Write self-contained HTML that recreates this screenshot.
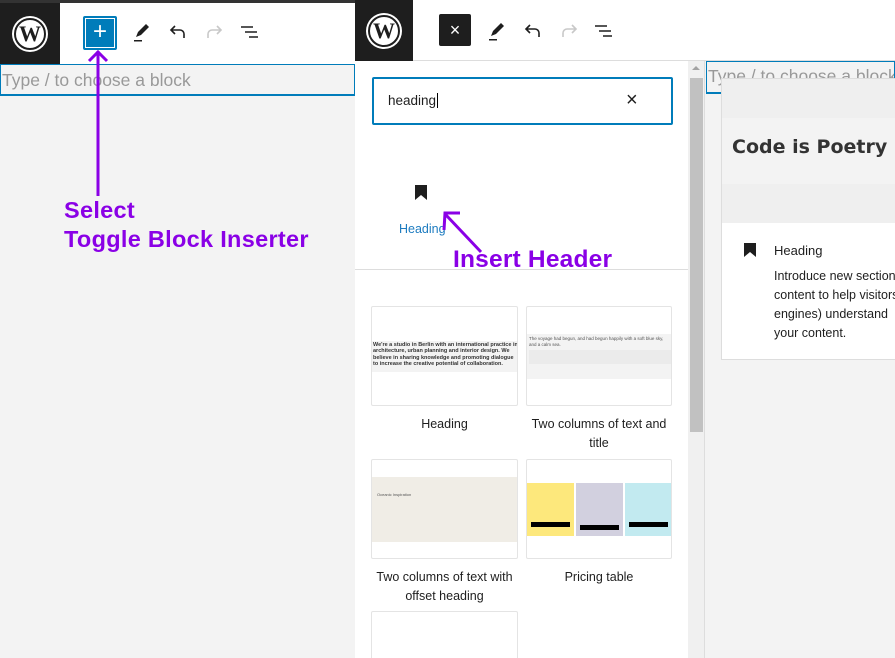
<!DOCTYPE html>
<html><head><meta charset="utf-8"><style>
*{margin:0;padding:0;box-sizing:border-box}
html,body{width:895px;height:658px;overflow:hidden}
body{position:relative;background:#f3f3f3;font-family:"Liberation Sans",sans-serif}
.a{position:absolute}
.logo{background:#1e1e1e;display:flex;align-items:center;justify-content:center}
.wp{width:32px;height:32px;border-radius:50%;background:#fff;color:#1e1e1e;font:bold 22px "Liberation Serif",serif;display:flex;align-items:center;justify-content:center;border:2px solid #1e1e1e;box-shadow:0 0 0 2px #fff}
.purple{color:#8a00e6;font-weight:bold}
.thumb{position:absolute;background:#fff;border:1px solid #e4e4e4;border-radius:2px;overflow:hidden}
.cap{position:absolute;font-size:12.5px;color:#1e1e1e;text-align:center;line-height:19px}
</style></head><body>
<!-- LEFT -->
<div class="a" style="left:0;top:0;width:355px;height:64px;background:#fff;border-top:3px solid #333"></div>
<div class="a logo" style="left:0;top:3px;width:60px;height:61px"><div class="wp">W</div></div>
<div class="a" style="left:83px;top:16px;width:34px;height:34px;background:#007cba;border:2px solid #007cba;box-shadow:inset 0 0 0 1px #fff;border-radius:2px;color:#fff;font-size:24px;line-height:28px;text-align:center">+</div>
<svg class="a" style="left:130px;top:20px" width="24" height="24" viewBox="0 0 24 24"><path d="M6 17l2-5 8-8 3 3-8 8z" fill="#1e1e1e"/><rect x="4" y="20" width="8" height="1.5" fill="#1e1e1e"/></svg>
<svg class="a" style="left:166px;top:20px" width="24" height="24" viewBox="0 0 24 24"><path d="M18 18v-4a4 4 0 0 0-4-4H6M9 6l-4 4 4 4" fill="none" stroke="#1e1e1e" stroke-width="1.6"/></svg>
<svg class="a" style="left:202px;top:20px" width="24" height="24" viewBox="0 0 24 24"><path d="M6 18v-4a4 4 0 0 1 4-4h8M15 6l4 4-4 4" fill="none" stroke="#c8c8c8" stroke-width="1.6"/></svg>
<svg class="a" style="left:238px;top:20px" width="24" height="24" viewBox="0 0 24 24"><path d="M3 7h12M7 12h12M11 17h9" stroke="#1e1e1e" stroke-width="1.6"/></svg>
<div class="a" style="left:0;top:64px;width:355px;height:32px;border:1px solid #007cba;border-bottom:2px solid #007cba;font-size:17.5px;color:#999;padding:5px 0 0 1px;background:#f3f3f3">Type / to choose a block</div>
<svg class="a" style="left:85px;top:48px" width="26" height="148"><path d="M13 148V3M4 13l9-9 9 9" fill="none" stroke="#8a00e6" stroke-width="3"/></svg>
<div class="a purple" style="left:64px;top:196px;font-size:23.5px;line-height:29px;letter-spacing:0.3px">Select<br>Toggle Block Inserter</div>

<!-- RIGHT -->
<div class="a" style="left:355px;top:0;width:540px;height:61px;background:#fff;border-bottom:1px solid #ddd"></div>
<div class="a logo" style="left:355px;top:0;width:58px;height:61px"><div class="wp">W</div></div>
<div class="a" style="left:439px;top:14px;width:32px;height:32px;background:#1e1e1e;border-radius:2px;color:#fff;font-size:18px;line-height:32px;text-align:center">×</div>
<svg class="a" style="left:485px;top:19px" width="24" height="24" viewBox="0 0 24 24"><path d="M6 17l2-5 8-8 3 3-8 8z" fill="#1e1e1e"/><rect x="4" y="20" width="8" height="1.5" fill="#1e1e1e"/></svg>
<svg class="a" style="left:521px;top:19px" width="24" height="24" viewBox="0 0 24 24"><path d="M18 18v-4a4 4 0 0 0-4-4H6M9 6l-4 4 4 4" fill="none" stroke="#1e1e1e" stroke-width="1.6"/></svg>
<svg class="a" style="left:557px;top:19px" width="24" height="24" viewBox="0 0 24 24"><path d="M6 18v-4a4 4 0 0 1 4-4h8M15 6l4 4-4 4" fill="none" stroke="#c8c8c8" stroke-width="1.6"/></svg>
<svg class="a" style="left:592px;top:19px" width="24" height="24" viewBox="0 0 24 24"><path d="M3 7h12M7 12h12M11 17h9" stroke="#1e1e1e" stroke-width="1.6"/></svg>

<!-- inserter panel -->
<div class="a" style="left:355px;top:61px;width:333px;height:597px;background:#fff"></div>
<div class="a" style="left:372px;top:77px;width:301px;height:48px;border:2px solid #007cba;border-radius:2px;font-size:13.5px;color:#1e1e1e;padding:14px 0 0 14px">heading<span style="border-left:1px solid #000;margin-left:1px"></span></div>
<div class="a" style="left:626px;top:89px;font-size:20px;color:#1e1e1e">×</div>
<svg class="a" style="left:414px;top:185px" width="14" height="15"><path d="M1 0h12v15l-6-5-6 5z" fill="#1e1e1e"/></svg>
<div class="a" style="left:399px;top:222px;font-size:12.5px;color:#1e7cc0">Heading</div>
<svg class="a" style="left:438px;top:205px" width="50" height="50"><path d="M43 47L8 10M6 25L7 8 22 8" fill="none" stroke="#8a00e6" stroke-width="3"/></svg>
<div class="a purple" style="left:453px;top:246px;font-size:24.5px;letter-spacing:0.2px">Insert Header</div>
<div class="a" style="left:355px;top:269px;width:333px;height:1px;background:#ddd"></div>

<div class="thumb" style="left:371px;top:306px;width:147px;height:100px"><div class="a" style="left:0;top:34px;width:147px;height:31px;background:#f3f3f3;font:bold 5.5px/6.3px 'Liberation Sans';color:#333;padding:1px">We're a studio in Berlin with an international practice in architecture, urban planning and interior design. We believe in sharing knowledge and promoting dialogue to increase the creative potential of collaboration.</div></div>
<div class="thumb" style="left:526px;top:306px;width:146px;height:100px"><div class="a" style="left:0;top:27px;width:146px;height:45px;background:#f3f3f3;font:4.5px/5.5px 'Liberation Sans';color:#555;padding:2px">The voyage had begun, and had begun happily with a soft blue sky, and a calm sea.<div style="height:4px;margin-top:3px;border-top:14px solid #e4e4e4;opacity:.5"></div></div></div>
<div class="cap" style="left:371px;top:415px;width:147px">Heading</div>
<div class="cap" style="left:526px;top:415px;width:146px">Two columns of text and title</div>

<div class="thumb" style="left:371px;top:459px;width:147px;height:100px"><div class="a" style="left:0;top:17px;width:147px;height:65px;background:#f0ede6"><div style="font-size:4px;color:#555;margin:15px 0 0 5px">Oceanic Inspiration</div></div></div>
<div class="thumb" style="left:526px;top:459px;width:146px;height:100px">
<div class="a" style="left:0;top:23px;width:47px;height:53px;background:#fde87c"></div>
<div class="a" style="left:49px;top:23px;width:47px;height:53px;background:#d2d0df"></div>
<div class="a" style="left:98px;top:23px;width:48px;height:53px;background:#c2eaf0"></div>
<div class="a" style="left:4px;top:62px;width:39px;height:5px;background:#000"></div>
<div class="a" style="left:53px;top:65px;width:39px;height:5px;background:#000"></div>
<div class="a" style="left:102px;top:62px;width:39px;height:5px;background:#000"></div>
</div>
<div class="cap" style="left:371px;top:568px;width:147px">Two columns of text with offset heading</div>
<div class="cap" style="left:526px;top:568px;width:146px">Pricing table</div>
<div class="thumb" style="left:371px;top:611px;width:147px;height:60px"></div>

<!-- scrollbar -->
<div class="a" style="left:688px;top:61px;width:17px;height:597px;background:#f0f0f0;border-right:1px solid #ddd"></div>
<div class="a" style="left:690px;top:78px;width:13px;height:354px;background:#c1c1c1"></div>
<div class="a" style="left:692px;top:66px;width:0;height:0;border:4px solid transparent;border-bottom-color:#a3a3a3;border-top:0"></div>

<!-- right editor -->
<div class="a" style="left:706px;top:61px;width:189px;height:33px;border:1px solid #007cba;border-bottom:2px solid #007cba;font-size:17.5px;color:#999;padding:4px 0 0 1px;overflow:hidden;white-space:nowrap">Type / to choose a block</div>
<div class="a" style="left:721px;top:78px;width:174px;height:282px;background:#fff;border:1px solid #ddd;border-right:0">
<div style="height:39px;background:#efefef"></div>
<div style="height:66px;background:#f3f3f3;font:bold 19px 'DejaVu Sans',sans-serif;color:#333;padding:18px 0 0 10px;white-space:nowrap">Code is Poetry</div>
<div style="height:39px;background:#efefef"></div>
<svg style="position:absolute;left:22px;top:164px" width="12" height="14"><path d="M0 0h12v14l-6-5-6 5z" fill="#1e1e1e"/></svg>
<div style="position:absolute;left:52px;top:164px;font-size:13px;color:#1e1e1e;white-space:nowrap">Heading</div>
<div style="position:absolute;left:52px;top:188px;font-size:12.5px;line-height:19px;color:#1e1e1e;white-space:nowrap">Introduce new sections<br>content to help visitors<br>engines) understand<br>your content.</div>
</div>
</body></html>
